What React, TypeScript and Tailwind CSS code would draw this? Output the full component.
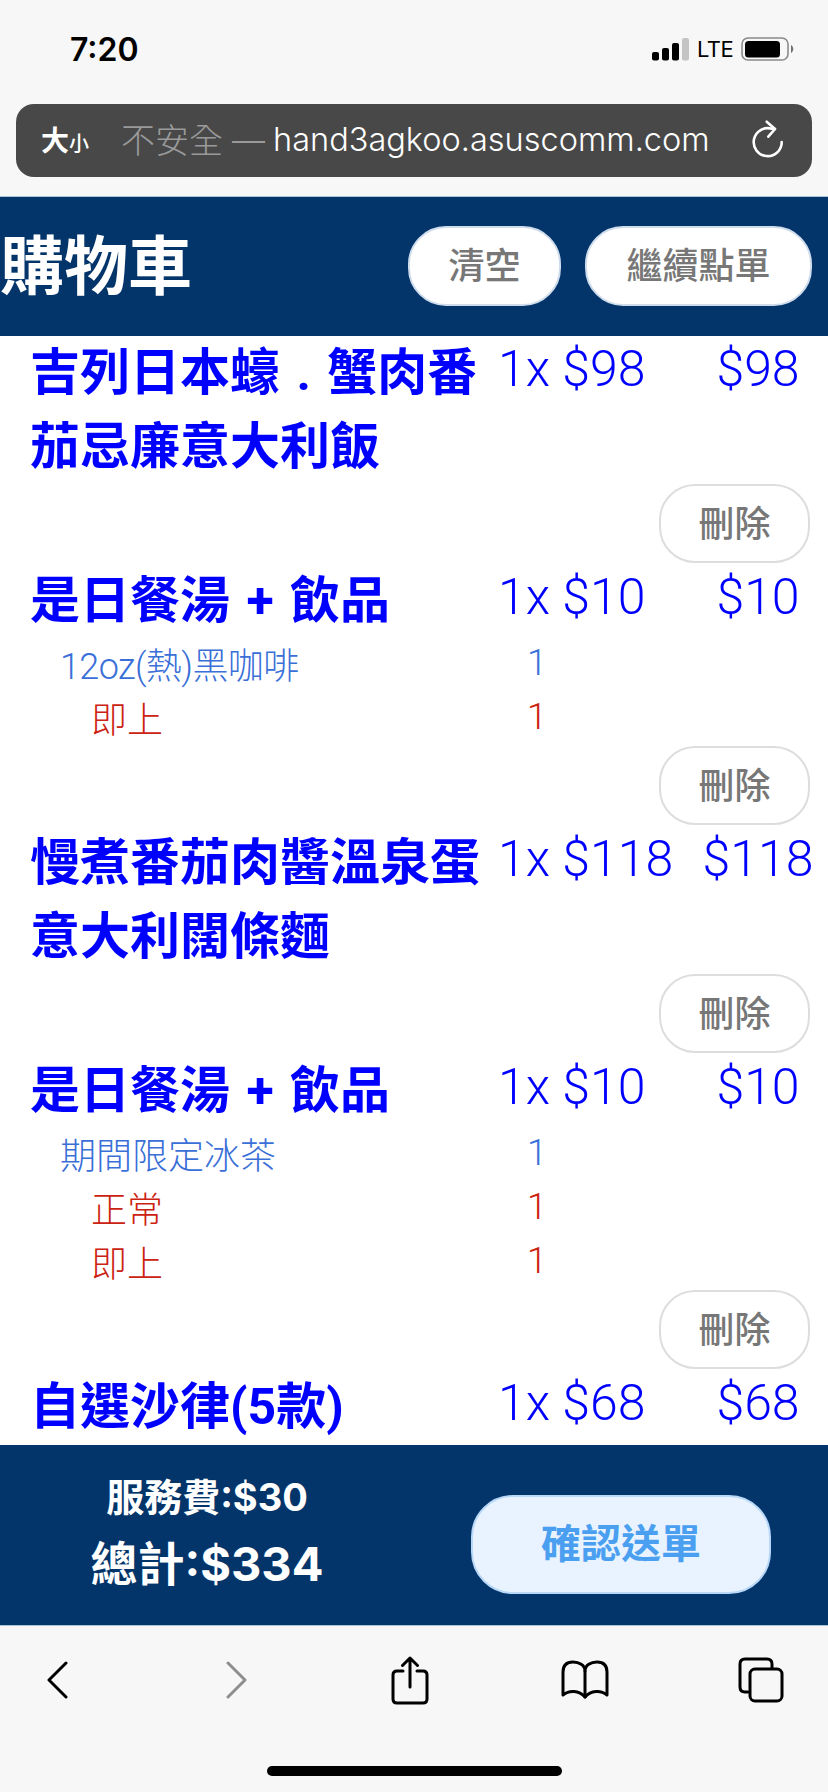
const cjk = "font-['Inter','Noto_Sans_CJK_TC',sans-serif]";

const DeleteButton = () => (
  <div className="flex justify-end pr-[18px]">
    <button className="w-[151px] h-[79px] rounded-[36px] bg-white border-2 border-[#dddddd] text-[#777777] text-[36px] font-medium leading-none mb-px">
      刪除
    </button>
  </div>
);

type Sub = { name: string; indent: string; color: string };

const Item = ({ lines, qty, price, subs = [], last = false }: { lines: string[]; qty: string; price: string; subs?: Sub[]; last?: boolean }) => (
  <div>
    <div className="flex items-start">
      <div className="w-[498px] pl-[30px] text-[#0000ff] text-[50px] font-['Roboto','Noto_Sans_CJK_TC',sans-serif] font-bold leading-[74px] whitespace-pre [word-spacing:4px]">
        {lines.map((l) => (
          <div key={l}>{l}</div>
        ))}
      </div>
      <div className="w-[190px] text-[#0000ff] text-[50px] font-['Roboto'] font-light leading-[74px] -mt-1 whitespace-pre">{qty}</div>
      <div className="w-[140px] text-center text-[#0000ff] text-[50px] font-['Roboto'] font-light leading-[74px] -mt-1">{price}</div>
    </div>
    {subs.map((s) => (
      <div key={s.name} className={`flex h-[54px] items-center ${s.color}`}>
        <div className={`w-[527px] mt-1 text-[36px] font-['Roboto','Noto_Sans_CJK_TC',sans-serif] font-light leading-none ${s.indent}`}>{s.name}</div>
        <div className="text-[36px] font-['Roboto'] font-light leading-none -mt-1">1</div>
      </div>
    ))}
    {!last && <DeleteButton />}
  </div>
);

const blue = "text-[#3a6fd8]";
const red = "text-[#cc2211]";

export default function App() {
  return (
    <div className={`h-[1792px] w-[828px] flex flex-col overflow-hidden bg-white ${cjk}`}>
      {/* browser top */}
      <div className="h-[196px] bg-[#f7f7f7] flex flex-col shrink-0">
        <div className="h-[104px] flex items-start justify-between pt-[31px] pl-[70px] pr-[34px]">
          <span className="text-[32px] font-semibold text-black leading-[38px]">7:20</span>
          <div className="flex items-center pt-[6px]">
            <svg width="37" height="23" viewBox="0 0 37 23">
              <rect x="0" y="14" width="7" height="8.5" rx="2" fill="#000" />
              <rect x="10" y="10" width="7" height="12.5" rx="2" fill="#000" />
              <rect x="20" y="5" width="7" height="17.5" rx="2" fill="#000" />
              <rect x="30" y="0" width="7" height="22.5" rx="2" fill="#c4c4c4" />
            </svg>
            <span className="w-[34px] text-[22px] text-black leading-none ml-2 mr-[10px] tracking-tight">LTE</span>
            <svg width="53" height="24" viewBox="0 0 53 24">
              <rect x="1" y="1" width="46" height="22" rx="6" fill="none" stroke="#8a8a8a" strokeWidth="1.6" />
              <rect x="4" y="4" width="35" height="16.5" rx="3.5" fill="#000" />
              <path d="M50 8 C53 10 53 14 50 16 Z" fill="#6f6f6f" />
            </svg>
          </div>
        </div>
        <div className="mx-4 h-[73px] rounded-[18px] bg-[#484848] flex items-center pl-[25px] pr-[28px]">
          <span className="text-white font-bold text-[28px] leading-none">大</span>
          <span className="text-white font-medium text-[20px] leading-none mt-[6px]">小</span>
          <span className="ml-8 text-[34px] text-[#9a9a9a] font-light leading-none">不安全</span>
          <span className="ml-[9px] text-[33px] text-[#9a9a9a] font-light leading-none">—</span>
          <span className="ml-2 text-[32.5px] text-white font-light leading-none">hand3agkoo.asuscomm.com</span>
          <svg className="ml-auto" width="34" height="45" viewBox="0 0 34 45" fill="none" stroke="#fff" strokeWidth="2.6" strokeLinecap="round" strokeLinejoin="round">
            <path d="M31.7 24 A14 14 0 1 1 22 10.8 L25 11" />
            <path d="M16.7 3.7 L25 11 L18.3 18.7" />
          </svg>
        </div>
      </div>

      {/* header */}
      <div className="h-[140px] shrink-0 bg-[#03356a] border-t border-[#a9c4d8] flex items-center justify-between pr-4 pb-[2px]">
        <h1 className="text-white text-[64px] font-bold leading-none">購物車</h1>
        <div className="flex gap-6">
          <button className="w-[153px] h-[80px] rounded-[38px] bg-white border-2 border-[#cfdcec] text-[#777777] text-[36px] font-medium leading-none">清空</button>
          <button className="w-[227px] h-[80px] rounded-[38px] bg-white border-2 border-[#cfdcec] text-[#777777] text-[36px] font-medium leading-none">繼續點單</button>
        </div>
      </div>

      {/* cart list */}
      <div className="flex-1 overflow-hidden">
        <Item lines={["吉列日本蠔 . 蟹肉番", "茄忌廉意大利飯"]} qty="1x $98" price="$98" />
        <Item
          lines={["是日餐湯 + 飲品"]}
          qty="1x $10"
          price="$10"
          subs={[
            { name: "12oz(熱)黑咖啡", indent: "pl-[60px] tracking-[-0.6px]", color: blue },
            { name: "即上", indent: "pl-[91px]", color: red },
          ]}
        />
        <Item lines={["慢煮番茄肉醬溫泉蛋", "意大利闊條麵"]} qty="1x $118" price="$118" />
        <Item
          lines={["是日餐湯 + 飲品"]}
          qty="1x $10"
          price="$10"
          subs={[
            { name: "期間限定冰茶", indent: "pl-[60px]", color: blue },
            { name: "正常", indent: "pl-[91px]", color: red },
            { name: "即上", indent: "pl-[91px]", color: red },
          ]}
        />
        <Item lines={["自選沙律(5款)"]} qty="1x $68" price="$68" last />
      </div>

      {/* totals */}
      <div className="h-[181px] shrink-0 bg-[#03356a] border-b border-[#a9c4d8] flex items-center">
        <div className="w-[414px] flex flex-col items-center text-white font-bold -mt-2">
          <div className="text-[38px] leading-[66px]">服務費:$30</div>
          <div className="text-[47px] leading-[68px]">總計:$334</div>
        </div>
        <button className="ml-[57px] mt-[18px] w-[300px] h-[99px] rounded-[42px] bg-[#e8f3ff] border-2 border-[#b9d8f8] text-[#4a9ff0] text-[40px] font-bold leading-none">
          確認送單
        </button>
      </div>

      {/* browser bottom */}
      <div className="h-[166px] shrink-0 bg-[#f7f7f7] flex flex-col">
        <div className="flex items-center h-[76px] mt-4 pl-[46px]">
          <svg width="22" height="38" viewBox="0 0 22 38" fill="none" stroke="#000" strokeWidth="3" strokeLinecap="round" strokeLinejoin="round">
            <path d="M20 2 L3 19 L20 36" />
          </svg>
          <svg className="ml-[158px]" width="22" height="38" viewBox="0 0 22 38" fill="none" stroke="#8e8e8e" strokeWidth="3" strokeLinecap="round" strokeLinejoin="round">
            <path d="M2 2 L19 19 L2 36" />
          </svg>
          <svg className="ml-[142px]" width="40" height="49" viewBox="0 0 40 49" fill="none" stroke="#000" strokeWidth="3" strokeLinecap="round" strokeLinejoin="round">
            <path d="M13 15 H7 Q3 15 3 19 V43 Q3 47 7 47 H33 Q37 47 37 43 V19 Q37 15 33 15 H27" />
            <path d="M20 31 V2 M12.5 9.5 L20 2 L27.5 9.5" />
          </svg>
          <svg className="ml-[131px]" width="48" height="40" viewBox="0 0 48 40" fill="none" stroke="#000" strokeWidth="3" strokeLinecap="round" strokeLinejoin="round">
            <path d="M2 35 V12 C2 5 6 2 12 2 C18 2 24 5 24 11 C24 5 30 2 36 2 C42 2 46 5 46 12 V35 C40 30 30 30 24 37 C18 30 8 30 2 35 Z" />
            <path d="M24 11 V37" />
          </svg>
          <svg className="ml-[129px]" width="46" height="46" viewBox="0 0 46 46" fill="none" stroke="#000" strokeWidth="3" strokeLinecap="round" strokeLinejoin="round">
            <path d="M10 35 H7 Q2 35 2 30 V7 Q2 2 7 2 H29 Q34 2 34 7 V11" />
            <rect x="12" y="12" width="32" height="32" rx="5" />
          </svg>
        </div>
        <div className="mt-[48px] mx-auto w-[295px] h-[10px] rounded-full bg-black" />
      </div>
    </div>
  );
}
